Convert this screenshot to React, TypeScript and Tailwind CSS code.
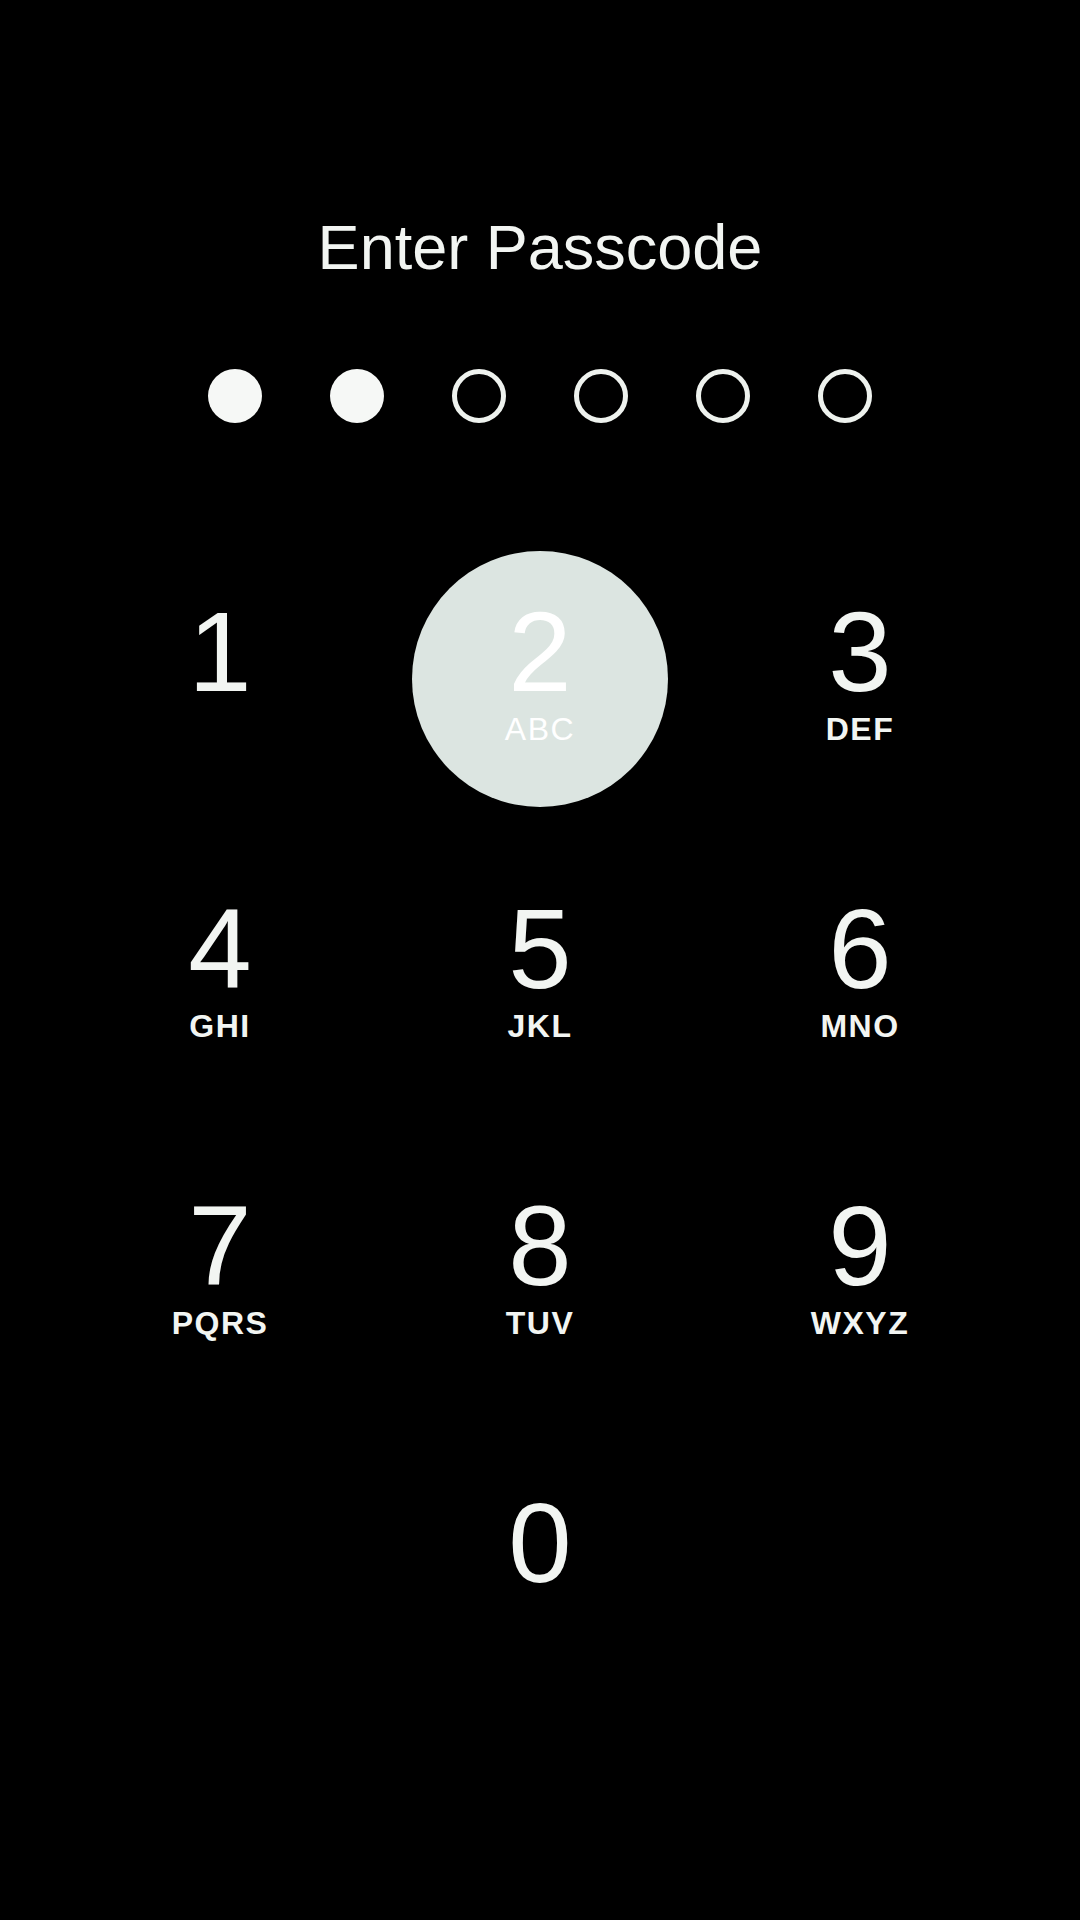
import React from "react";

const keys: { d: string; l?: string; active?: boolean }[] = [
  { d: "1", l: "" },
  { d: "2", l: "ABC", active: true },
  { d: "3", l: "DEF" },
  { d: "4", l: "GHI" },
  { d: "5", l: "JKL" },
  { d: "6", l: "MNO" },
  { d: "7", l: "PQRS" },
  { d: "8", l: "TUV" },
  { d: "9", l: "WXYZ" },
];

function Key({ d, l, active }: { d: string; l?: string; active?: boolean }) {
  return (
    <div className="flex h-[297px] items-center justify-center">
      <div
        className={`flex h-[256px] w-[256px] flex-col items-center rounded-full pt-[51px] ${
          active ? "bg-[#dce5e1]" : "bg-black"
        }`}
      >
        <div
          className={`text-[114px] leading-[100px] ${active ? "text-white" : "text-[#f2f5f2]"}`}
        >
          {d}
        </div>
        {l !== undefined && (
          <div
            className={`mt-[11px] text-[32px] leading-none tracking-[1.5px] ${
              active ? "font-normal text-white" : "font-bold text-[#f2f5f2]"
            }`}
          >
            {l || "\u00a0"}
          </div>
        )}
      </div>
    </div>
  );
}

export default function App() {
  return (
    <div
      className="flex min-h-[1920px] w-[1080px] flex-col items-center bg-black"
      style={{ fontFamily: '"Liberation Sans", Arial, sans-serif' }}
    >
      <div className="mt-[216px] text-[63px] leading-none text-[#f2f5f2]">Enter Passcode</div>
      <div className="mt-[90px] flex gap-[68px]">
        {[true, true, false, false, false, false].map((f, i) =>
          f ? (
            <div key={i} className="h-[54px] w-[54px] rounded-full bg-[#f6f8f6]" />
          ) : (
            <div key={i} className="h-[54px] w-[54px] rounded-full border-[5px] border-[#eef2ee]" />
          )
        )}
      </div>
      <div className="mt-[107px] grid w-[960px] grid-cols-3">
        {keys.map((k) => (
          <Key key={k.d} d={k.d} l={k.l} active={k.active} />
        ))}
        <div />
        <Key d="0" />
        <div />
      </div>
    </div>
  );
}
